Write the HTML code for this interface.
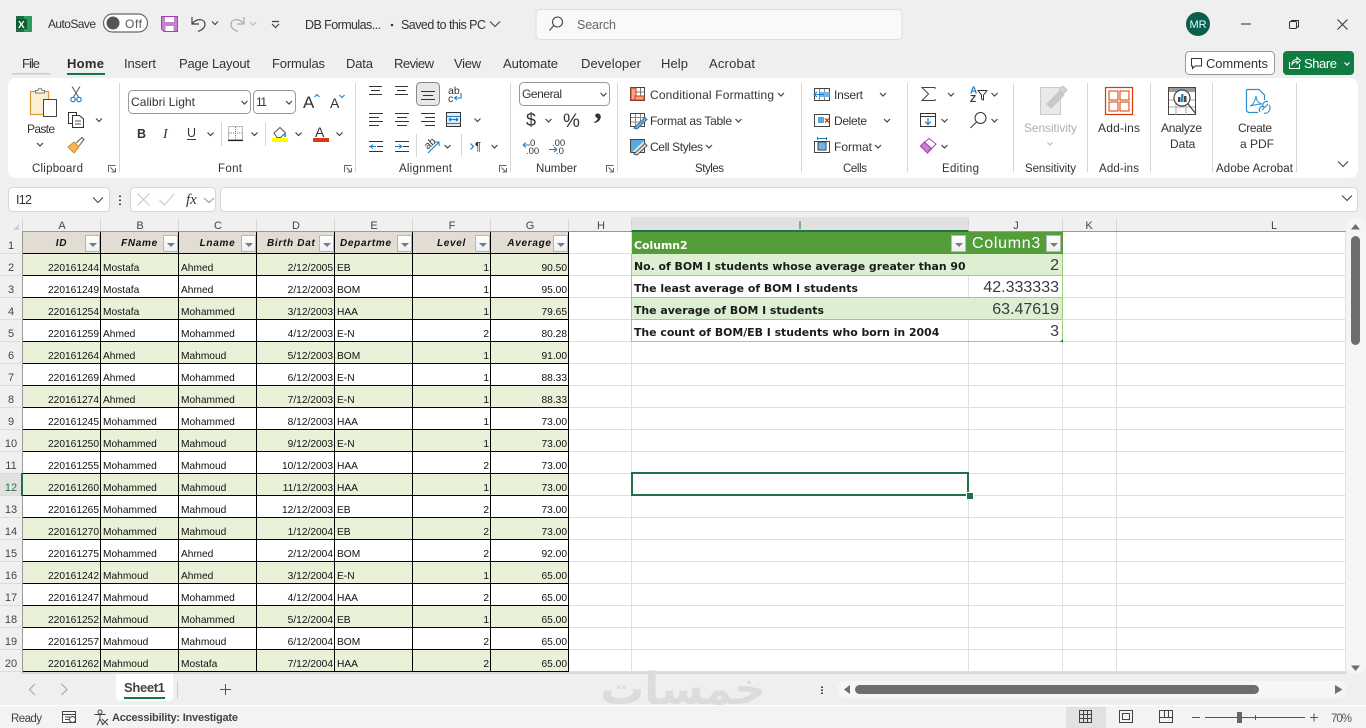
<!DOCTYPE html>
<html><head><meta charset="utf-8"><title>Excel</title>
<style>
html,body{margin:0;padding:0;width:1366px;height:728px;overflow:hidden;background:#efefef;font-family:"Liberation Sans",sans-serif}
.a{position:absolute}
svg text{font-family:"Liberation Sans",sans-serif;font-size:12px;fill:#333}
svg .s{font-size:11.5px}
svg .tb{font-size:13px}
svg .rn{font-size:11px;fill:#444;text-anchor:middle}
#grid{left:569px;top:232px;width:777px;height:441px;background:#fff;
background-image:repeating-linear-gradient(to bottom,transparent 0,transparent 21px,#e0e0e0 21px,#e0e0e0 22px)}
.v{position:absolute;top:0;width:1px;height:441px;background:#e0e0e0}
table{position:absolute;left:23px;top:232px;border-collapse:separate;border-spacing:0;table-layout:fixed;width:546px;background:#fff}
td{box-sizing:border-box;width:78px;height:22px;padding:0 1px 0 2px;border-right:1px solid #000;border-bottom:1px solid #000;font-size:10.2px;line-height:12px;color:#111;vertical-align:bottom;white-space:nowrap;overflow:hidden}
tr.g td{background:#e9f1d9}
td.r{text-align:right}
tr.h td{background:#e3dcd2;font-weight:bold;font-style:italic;font-size:10px;letter-spacing:.7px;text-align:center;padding:0 0 3px 0}
.f{position:absolute;box-sizing:border-box;width:15px;height:17px;top:235px;background:linear-gradient(#fff,#eceff2);border:1px solid #b8b8b8}
.f:after{content:"";position:absolute;left:3px;top:7px;border-left:4px solid transparent;border-right:4px solid transparent;border-top:4px solid #7b7b7b}
.t{position:absolute;left:631px;width:432px;height:22px;box-sizing:border-box;border-left:1px solid #9ad07d;border-right:1px solid #9ad07d;border-bottom:1px solid #9ad07d}
.t b{position:absolute;left:2px;top:6px;font:bold 10.9px/13px "DejaVu Sans",sans-serif;color:#1b1b1b;white-space:nowrap}
.t i{position:absolute;right:3px;top:3px;font:normal 16px/18px "Liberation Sans",sans-serif;color:#3a3a3a}
.t u{position:absolute;left:336px;top:0;width:1px;height:21px;background:#e0e0e0}
</style></head><body>

<div class="a" id="grid">
<div class="v" style="left:62px"></div><div class="v" style="left:399px"></div><div class="v" style="left:493px"></div><div class="v" style="left:547px"></div><div class="v" style="left:776px"></div>
</div>
<div class="a" style="left:22px;top:232px;width:1px;height:441px;background:#9a9a9a"></div>
<div class="a" style="left:22px;top:672px;width:1324px;height:2px;background:#d9d9d9"></div>

<table>
<tr class="h"><td>ID</td><td>FName</td><td>Lname</td><td style="text-align:left;padding-left:10px">Birth Dat</td><td style="text-align:left;padding-left:5px">Departme</td><td>Level</td><td>Average</td></tr>
<tr class="g"><td class="r">220161244</td><td>Mostafa</td><td>Ahmed</td><td class="r">2/12/2005</td><td>EB</td><td class="r">1</td><td class="r">90.50</td></tr>
<tr><td class="r">220161249</td><td>Mostafa</td><td>Ahmed</td><td class="r">2/12/2003</td><td>BOM</td><td class="r">1</td><td class="r">95.00</td></tr>
<tr class="g"><td class="r">220161254</td><td>Mostafa</td><td>Mohammed</td><td class="r">3/12/2003</td><td>HAA</td><td class="r">1</td><td class="r">79.65</td></tr>
<tr><td class="r">220161259</td><td>Ahmed</td><td>Mohammed</td><td class="r">4/12/2003</td><td>E-N</td><td class="r">2</td><td class="r">80.28</td></tr>
<tr class="g"><td class="r">220161264</td><td>Ahmed</td><td>Mahmoud</td><td class="r">5/12/2003</td><td>BOM</td><td class="r">1</td><td class="r">91.00</td></tr>
<tr><td class="r">220161269</td><td>Ahmed</td><td>Mohammed</td><td class="r">6/12/2003</td><td>E-N</td><td class="r">1</td><td class="r">88.33</td></tr>
<tr class="g"><td class="r">220161274</td><td>Ahmed</td><td>Mohammed</td><td class="r">7/12/2003</td><td>E-N</td><td class="r">1</td><td class="r">88.33</td></tr>
<tr><td class="r">220161245</td><td>Mohammed</td><td>Mohammed</td><td class="r">8/12/2003</td><td>HAA</td><td class="r">1</td><td class="r">73.00</td></tr>
<tr class="g"><td class="r">220161250</td><td>Mohammed</td><td>Mahmoud</td><td class="r">9/12/2003</td><td>E-N</td><td class="r">1</td><td class="r">73.00</td></tr>
<tr><td class="r">220161255</td><td>Mohammed</td><td>Mahmoud</td><td class="r">10/12/2003</td><td>HAA</td><td class="r">2</td><td class="r">73.00</td></tr>
<tr class="g"><td class="r">220161260</td><td>Mohammed</td><td>Mahmoud</td><td class="r">11/12/2003</td><td>HAA</td><td class="r">1</td><td class="r">73.00</td></tr>
<tr><td class="r">220161265</td><td>Mohammed</td><td>Mahmoud</td><td class="r">12/12/2003</td><td>EB</td><td class="r">2</td><td class="r">73.00</td></tr>
<tr class="g"><td class="r">220161270</td><td>Mohammed</td><td>Mahmoud</td><td class="r">1/12/2004</td><td>EB</td><td class="r">2</td><td class="r">73.00</td></tr>
<tr><td class="r">220161275</td><td>Mohammed</td><td>Ahmed</td><td class="r">2/12/2004</td><td>BOM</td><td class="r">2</td><td class="r">92.00</td></tr>
<tr class="g"><td class="r">220161242</td><td>Mahmoud</td><td>Ahmed</td><td class="r">3/12/2004</td><td>E-N</td><td class="r">1</td><td class="r">65.00</td></tr>
<tr><td class="r">220161247</td><td>Mahmoud</td><td>Mohammed</td><td class="r">4/12/2004</td><td>HAA</td><td class="r">2</td><td class="r">65.00</td></tr>
<tr class="g"><td class="r">220161252</td><td>Mahmoud</td><td>Mohammed</td><td class="r">5/12/2004</td><td>EB</td><td class="r">1</td><td class="r">65.00</td></tr>
<tr><td class="r">220161257</td><td>Mahmoud</td><td>Mahmoud</td><td class="r">6/12/2004</td><td>BOM</td><td class="r">2</td><td class="r">65.00</td></tr>
<tr class="g"><td class="r">220161262</td><td>Mahmoud</td><td>Mostafa</td><td class="r">7/12/2004</td><td>HAA</td><td class="r">2</td><td class="r">65.00</td></tr>
</table>
<div class="f" style="left:85px"></div><div class="f" style="left:163px"></div><div class="f" style="left:241px"></div><div class="f" style="left:319px"></div><div class="f" style="left:397px"></div><div class="f" style="left:475px"></div><div class="f" style="left:553px"></div>

<div class="a" style="left:632px;top:232px;width:431px;height:22px;background:#549e39;color:#fff;box-sizing:border-box">
<span class="a" style="left:2px;top:7px;font:bold 10.9px/13px 'DejaVu Sans',sans-serif;white-space:nowrap">Column2</span>
<span class="a" style="left:340px;top:3px;font:16px/18px 'Liberation Sans',sans-serif;letter-spacing:.7px;white-space:nowrap">Column3</span>
</div>
<div class="f" style="left:951px"></div><div class="f" style="left:1046px"></div>
<div class="t" style="top:254px;background:#dcefd3"><b>No. of BOM I students whose average greater than 90</b><i>2</i></div>
<div class="t" style="top:276px;background:#fff"><u></u><b>The least average of BOM I students</b><i>42.333333</i></div>
<div class="t" style="top:298px;background:#dcefd3"><b>The average of BOM I students</b><i>63.47619</i></div>
<div class="t" style="top:320px;background:#fff"><u></u><b>The count of BOM/EB I students who born in 2004</b><i>3</i></div>
<div class="a" style="left:1060px;top:339px;width:0;height:0;border-left:3px solid transparent;border-bottom:3px solid #217346"></div>

<div class="a" style="left:631px;top:472px;width:338px;height:24px;box-sizing:border-box;border:2px solid #1f7246"></div>
<div class="a" style="left:966px;top:492px;width:6px;height:6px;background:#1f7246;border:1px solid #fff"></div>

<svg class="a" style="left:0;top:0" width="1366" height="728" viewBox="0 0 1366 728">
<defs>
<path id="c" d="M-3 -1.5L0 1.5L3 -1.5" fill="none" stroke="#444" stroke-width="1.2"/>
<path id="c2" d="M-5 -2.5L0 2.5L5 -2.5" fill="none" stroke="#444" stroke-width="1.1"/>
</defs>

<!-- title bar -->
<rect x="16" y="16" width="16" height="16" fill="#1d6f42"/><rect x="24" y="16" width="8" height="16" fill="#2f9a5e"/><rect x="16" y="19" width="11" height="10" fill="#0f5c33"/>
<text x="18" y="28" style="font-size:10px;font-weight:bold;fill:#fff">X</text>
<text x="48" y="28" textLength="48">AutoSave</text>
<rect x="103.5" y="14" width="44" height="18" rx="9" fill="#fff" stroke="#666" stroke-width="1.2"/>
<circle cx="113" cy="23" r="6.5" fill="#555"/>
<text x="125" y="28" textLength="17" style="fill:#555">Off</text>
<path d="M161.5 16.5H177.5V31.5H164L161.5 29Z" fill="#c77fd0" stroke="#a33fb2"/><rect x="165" y="17" width="9" height="5" fill="#fff"/><rect x="165.5" y="26" width="8" height="5" fill="#fff"/>
<path d="M192 17V24H199M192.5 23.5C197 18 205 18.500 205 24.500C205 27.500 202 30 198 31.500" fill="none" stroke="#444" stroke-width="1.2"/>
<use href="#c" x="215" y="23"/>
<path d="M244 17V24H237M243.500 23.500C239 18 231 18.500 231 24.500C231 27.500 234 30 238 31.500" fill="none" stroke="#aaa" stroke-width="1.2"/>
<path d="M250 22L253 25L256 22" fill="none" stroke="#bbb" stroke-width="1.200"/>
<path d="M272 21.500H279M272 24L275.500 27.500L279 24" fill="none" stroke="#444" stroke-width="1.200"/>
<text x="305" y="29" textLength="76" style="font-size:12.500px">DB Formulas...</text>
<circle cx="392" cy="25" r="1.300" fill="#333"/>
<text x="401" y="29" textLength="85" style="font-size:12.500px">Saved to this PC</text>
<use href="#c2" x="495" y="24"/>

<rect x="536" y="9.500" width="366" height="30" rx="4" fill="#f9f9f9" stroke="#dedede"/>
<circle cx="557.500" cy="22" r="5" fill="none" stroke="#444" stroke-width="1.100"/><path d="M553.800 25.500L549.500 30.500" stroke="#444" stroke-width="1.100"/>
<text x="577" y="29" textLength="39" style="fill:#666;font-size:12.500px">Search</text>

<circle cx="1198" cy="24" r="12" fill="#0b5e4e"/>
<text x="1198" y="28" text-anchor="middle" style="fill:#dff;font-size:11px">MR</text>
<path d="M1241 24H1251" stroke="#333"/>
<rect x="1289.500" y="21.500" width="7" height="7" rx="1" fill="none" stroke="#333"/><path d="M1291.500 21.500V20.500H1298.500V27H1296.500" fill="none" stroke="#333"/>
<path d="M1337.500 19.500L1347.500 29.500M1347.500 19.500L1337.500 29.500" stroke="#333"/>

<!-- tabs -->
<g>
<text x="22" y="68" textLength="18" class="tb">File</text>
<text x="67" y="68" textLength="37" style="font-weight:bold;font-size:13px;fill:#2a2a2a">Home</text>
<text x="124" y="68" textLength="32" class="tb">Insert</text>
<text x="179" y="68" textLength="71" class="tb">Page Layout</text>
<text x="272" y="68" textLength="53" class="tb">Formulas</text>
<text x="346" y="68" textLength="27" class="tb">Data</text>
<text x="394" y="68" textLength="40" class="tb">Review</text>
<text x="454" y="68" textLength="27" class="tb">View</text>
<text x="503" y="68" textLength="55" class="tb">Automate</text>
<text x="581" y="68" textLength="60" class="tb">Developer</text>
<text x="661" y="68" textLength="27" class="tb">Help</text>
<text x="709" y="68" textLength="46" class="tb">Acrobat</text>
</g>
<rect x="12" y="73" width="38" height="1.500" fill="#ccc"/>
<rect x="67" y="73" width="38" height="2" fill="#107c41"/>

<rect x="1185.500" y="51.500" width="89" height="23" rx="4" fill="#fff" stroke="#999"/>
<path d="M1191.500 58.500H1201.500V66H1195L1192.500 68.500V66H1191.500Z" fill="none" stroke="#333"/>
<text x="1206" y="68" textLength="62" class="tb">Comments</text>
<rect x="1283" y="51" width="71" height="24" rx="4" fill="#107c41"/>
<path d="M1289.500 62V68.500H1299.500V64M1292 64.500C1292 60.500 1295 59.500 1297 59.500V57.500L1300.500 60.500L1297 63.500V61.500C1295 61.500 1293.500 62.500 1292 64.500Z" fill="none" stroke="#fff"/>
<text x="1304" y="68" textLength="33" style="fill:#fff;font-size:13px">Share</text>
<path d="M1344.500 62.500L1347 65L1349.500 62.500" fill="none" stroke="#fff" stroke-width="1.200"/>

<!-- ribbon -->
<rect x="8" y="78" width="1350" height="100" rx="8" fill="#fff"/>
<path d="M119.500 83V172M355.500 83V172M510.500 83V172M617.500 83V172M801.500 83V172M907.500 83V172M1013.500 83V172M1087.500 83V172M1150.500 83V172M1212.500 83V172M1296.500 83V172" stroke="#d6d6d6"/>
<path d="M221.500 122V146M265.500 122V146M416.500 134V157M461.500 134V157" stroke="#d6d6d6"/>

<!-- clipboard -->
<rect x="30.500" y="91.500" width="18" height="23" fill="#fbeed2" stroke="#d89a30" stroke-width="1.200"/>
<path d="M35.500 93V90.500H38C38.500 87.500 41.500 87.500 42 90.500H44.500V93Z" fill="#fff" stroke="#777"/>
<rect x="43.500" y="99.500" width="13" height="17" fill="#fff" stroke="#444"/>
<text x="27" y="133" textLength="28">Paste</text>
<use href="#c" x="40" y="144.500"/>
<path d="M72 86.500L78.500 97M80 86.500L73.500 97" stroke="#555" stroke-width="1"/><circle cx="73" cy="99.500" r="2.200" fill="none" stroke="#1a7fc8" stroke-width="1.200"/><circle cx="79" cy="99.500" r="2.200" fill="none" stroke="#1a7fc8" stroke-width="1.200"/>
<path d="M72 123.500H68.500V112.500H76.500V115.500" fill="none" stroke="#333"/><path d="M72.500 115.500H79.500L83.500 119V127.500H72.500Z" fill="#fff" stroke="#333"/><path d="M75 121H81M75 124H81" stroke="#555"/>
<use href="#c" x="99" y="120"/>
<path d="M68 147L74 142L79 147L74 153Z" fill="#f3b560" stroke="#d48a2c"/><path d="M76 143L82 137.500L84 139.500L79 146" fill="#fff" stroke="#555"/>
<text x="32" y="172" textLength="51" class="s">Clipboard</text>
<path d="M108.500 172V165.500H115.500M115.500 172H111.500M115.500 172V168M110.500 167.500L115 172" fill="none" stroke="#666"/>

<!-- font -->
<rect x="128.500" y="90.500" width="122" height="23" rx="4" fill="#fff" stroke="#999"/>
<rect x="253.500" y="90.500" width="42" height="23" rx="4" fill="#fff" stroke="#999"/>
<text x="131" y="106" textLength="64">Calibri Light</text>
<use href="#c" x="244.500" y="102.500"/>
<text x="256" y="106" textLength="11">11</text>
<use href="#c" x="289" y="102.500"/>
<text x="303" y="108" style="font-size:17px">A</text><path d="M314.500 97L317 94.500L319.500 97" fill="none" stroke="#1a7fc8" stroke-width="1.100"/>
<text x="330" y="108" style="font-size:14px">A</text><path d="M339.500 95L342 97.500L344.500 95" fill="none" stroke="#1a7fc8" stroke-width="1.100"/>
<text x="137" y="138" style="font-weight:bold;font-size:12.500px">B</text>
<text x="163" y="138" style="font-style:italic;font-family:'Liberation Serif',serif;font-size:14px">I</text>
<text x="187" y="137" style="font-size:12.500px">U</text><path d="M187 139.500H196" stroke="#333"/>
<use href="#c" x="210.500" y="134"/>
<rect x="228.500" y="126.500" width="14" height="13" fill="none" stroke="#777" stroke-dasharray="1 1"/><path d="M235.500 127V140M229 133H242" stroke="#777" stroke-dasharray="1 1"/><path d="M228 140.500H243" stroke="#222" stroke-width="1.200"/>
<use href="#c" x="254.500" y="134"/>
<path d="M274 133L280 127.500L285.500 133L280.500 137.500H277Z" fill="#fff" stroke="#555"/><path d="M285 134V137" stroke="#1a7fc8" stroke-width="1.500"/>
<rect x="272" y="138" width="16" height="4" fill="#ffff00"/>
<use href="#c" x="298.500" y="134"/>
<text x="315" y="137" style="font-size:14px">A</text>
<rect x="313" y="138" width="16" height="4" fill="#d93a12"/>
<use href="#c" x="339.500" y="134"/>
<text x="218" y="172" textLength="24" class="s">Font</text>
<path d="M344.500 172V165.500H351.500M351.500 172H347.500M351.500 172V168M346.500 167.500L351 172" fill="none" stroke="#666"/>

<!-- alignment -->
<rect x="416.500" y="82.500" width="23" height="23" rx="4" fill="#e8e8e8" stroke="#888"/>
<path d="M369 86.500H382M371 90.500H380M369 94.500H382" stroke="#333"/>
<path d="M395 91.500H408M397 95.500H406M395 99.500H408" stroke="#333" transform="translate(0,-5)"/>
<path d="M421 91.500H435M423 95.500H433M421 99.500H435" stroke="#333"/>
<text x="448" y="94" style="font-size:10.500px">ab</text><text x="448" y="102" style="font-size:10.500px">c</text><path d="M461 93V98H455M457 96L454.500 98L457 100" fill="none" stroke="#1a7fc8" stroke-width="1.100"/>
<path d="M369 113.500H383M369 117.500H379M369 121.500H383M369 125.500H379" stroke="#333"/>
<path d="M395 113.500H409M397 117.500H407M395 121.500H409M397 125.500H407" stroke="#333"/>
<path d="M421 113.500H435M425 117.500H435M421 121.500H435M425 125.500H435" stroke="#333"/>
<rect x="446.500" y="112.500" width="14" height="14" fill="#d9ecf8" stroke="#333"/><path d="M449 119.500H458M449 119.500L451 118M449 119.500L451 121M458 119.500L456 118M458 119.500L456 121" fill="none" stroke="#1a7fc8" stroke-width="1.100"/><path d="M446.500 116.500H460.500M446.500 123.500H460.500" stroke="#1a7fc8"/>
<use href="#c" x="477.500" y="120"/>
<path d="M369 146.500H376M370 146.500L373 144.500M370 146.500L373 148.500" fill="none" stroke="#1a7fc8"/><path d="M369 141.500H383M377 146.500H383M369 151.500H383" stroke="#333"/>
<path d="M395 146.500H402M402 146.500L399 144.500M402 146.500L399 148.500" fill="none" stroke="#1a7fc8"/><path d="M395 141.500H409M403 146.500H409M395 151.500H409" stroke="#333"/>
<text x="424" y="146" transform="rotate(-40 431 143)" style="font-size:10.500px">ab</text><path d="M428 153L439 142M435 142H439V146" fill="none" stroke="#1a7fc8" stroke-width="1.100"/>
<use href="#c" x="447.500" y="146.500"/>
<path d="M470.500 143.500L473.500 146.500L470.500 149.500" fill="none" stroke="#1a7fc8" stroke-width="1.200"/>
<text x="475" y="150.500" style="font-size:11.500px">¶</text>
<use href="#c" x="494.500" y="146.500"/>
<text x="399" y="172" textLength="53" class="s">Alignment</text>
<path d="M499.500 172V165.500H506.500M506.500 172H502.500M506.500 172V168M501.500 167.500L506 172" fill="none" stroke="#666"/>

<!-- number -->
<rect x="519.500" y="82.500" width="90" height="23" rx="4" fill="#fff" stroke="#999"/>
<text x="522" y="98" textLength="40">General</text>
<use href="#c" x="603.500" y="94.500"/>
<text x="526" y="126" style="font-size:18px">$</text>
<use href="#c" x="548.500" y="120.500"/>
<text x="563" y="127" style="font-size:19px;font-weight:normal">%</text>
<text x="594" y="118" style="font-size:32px;font-family:'Liberation Serif',serif;font-weight:bold">,</text>
<text x="530" y="146" style="font-size:9.500px">0</text><text x="526" y="154" style="font-size:9.500px">.00</text><path d="M523 145H530M523 145L526 142.500M523 145L526 147.500" fill="none" stroke="#1a7fc8" stroke-width="1.100"/>
<text x="552" y="146" style="font-size:9.500px">.00</text><text x="556" y="154" style="font-size:9.500px">.0</text><path d="M549 149.500H557M557 149.500L554 147M557 149.500L554 152" fill="none" stroke="#1a7fc8" stroke-width="1.100"/>
<text x="536" y="172" textLength="41" class="s">Number</text>
<path d="M606.500 172V165.500H613.500M613.500 172H609.500M613.500 172V168M608.500 167.500L613 172" fill="none" stroke="#666"/>

<!-- styles -->
<rect x="630.500" y="87.500" width="14" height="13" fill="#fff" stroke="#444"/><path d="M635.500 88V100M640.500 88V100M631 92H645M631 96.500H645" stroke="#777"/><rect x="631" y="88" width="5" height="12" fill="#f4a38e" stroke="#d83b01"/><rect x="635" y="96" width="9" height="4" fill="#f4a38e" stroke="#d83b01"/>
<text x="650" y="99" textLength="124">Conditional Formatting</text><use href="#c" x="781" y="94.500"/>
<rect x="630.500" y="113.500" width="14" height="13" fill="#fff" stroke="#444"/><path d="M631 117.500H645M635.500 114V127M640.500 114V127M631 122H645" stroke="#888"/><path d="M634 128L645 117.500L647 119.500L637 129Z" fill="#6fb1e0" stroke="#3b6f9e"/>
<text x="650" y="125" textLength="82">Format as Table</text><use href="#c" x="738.500" y="120.500"/>
<rect x="630.500" y="139.500" width="14" height="13" fill="#cfe6f7" stroke="#444"/><path d="M631 140L645 140L631 153Z" fill="#5ba7e0"/><path d="M634 154L645 143.500L647 145.500L637 155Z" fill="#e8e8e8" stroke="#555"/>
<text x="650" y="151" textLength="53">Cell Styles</text><use href="#c" x="709" y="146.500"/>
<text x="695" y="172" textLength="29" class="s">Styles</text>

<!-- cells -->
<rect x="814.500" y="88.500" width="15" height="12" fill="#fff" stroke="#444"/><path d="M819.500 89V100M824.500 89V100" stroke="#888"/><rect x="820" y="92" width="9.500" height="5" fill="#6fb7ea"/><path d="M814 94.500H824M817 92L814 94.500L817 97" fill="none" stroke="#1a7fc8" stroke-width="1.100"/>
<text x="834" y="99" textLength="29">Insert</text><use href="#c" x="883" y="94.500"/>
<rect x="814.500" y="114.500" width="15" height="12" fill="#fff" stroke="#444"/><rect x="818" y="117" width="6" height="6" fill="#58a8e0"/><path d="M825 118.500L829 122.500M829 118.500L825 122.500" stroke="#d83b01" stroke-width="1.300"/>
<text x="834" y="125" textLength="33">Delete</text><use href="#c" x="887" y="120.500"/>
<rect x="814.500" y="141.500" width="15" height="11" fill="#fff" stroke="#444"/><rect x="818" y="142" width="8" height="8" fill="#6fb7ea" stroke="#444"/><path d="M818 138.500H826M817.500 137V140M826.500 137V140" stroke="#1a7fc8"/>
<text x="834" y="151" textLength="38">Format</text><use href="#c" x="878" y="146.500"/>
<text x="843" y="172" textLength="24" class="s">Cells</text>

<!-- editing -->
<path d="M935 89V87.500H922L928.500 94L922 100.500H935V99" fill="none" stroke="#444"/>
<use href="#c" x="951" y="94.500"/>
<text x="970" y="93.500" style="font-size:10px;fill:#1a7fc8;font-weight:bold">A</text><text x="970" y="102" style="font-size:10px;fill:#333;font-weight:bold">Z</text><path d="M978 90.500H987L983.500 95V100L981.500 99V95Z" fill="none" stroke="#333"/>
<use href="#c" x="994.500" y="94.500"/>
<rect x="920.500" y="113.500" width="15" height="13" fill="#fff" stroke="#333"/><path d="M921 116.500H935" stroke="#333"/><path d="M928 118V124M925 121.500L928 124.500L931 121.500" fill="none" stroke="#1a7fc8" stroke-width="1.200"/>
<use href="#c" x="944.500" y="120.500"/>
<circle cx="980.500" cy="118" r="5.500" fill="none" stroke="#333"/><path d="M976.500 122L970.500 128" stroke="#333"/>
<use href="#c" x="994.500" y="120.500"/>
<path d="M920.500 146L929 138.500L936 144L927.500 153Z" fill="#fff" stroke="#a33fb2"/><path d="M920.500 146L924.500 142L931 148L927.500 153Z" fill="#c77fd0" stroke="#a33fb2"/>
<use href="#c" x="944.500" y="146.500"/>
<text x="942" y="172" textLength="37" class="s">Editing</text>

<!-- sensitivity -->
<rect x="1040.500" y="87.500" width="20" height="27" fill="#e9e9e9" stroke="#ccc"/>
<path d="M1047 104L1060 91L1064 95L1051 108Z" fill="#c9c9c9" stroke="#c4c4c4"/><path d="M1059 90L1063 86L1067 90L1063 94Z" fill="#d4d4d4" stroke="#c4c4c4"/>
<text x="1024" y="132" textLength="53" style="fill:#b0b0b0">Sensitivity</text>
<path d="M1047.500 142.500L1050 145L1052.500 142.500" fill="none" stroke="#bbb" stroke-width="1.200"/>
<text x="1025" y="172" textLength="51" class="s">Sensitivity</text>

<!-- add-ins -->
<rect x="1105.500" y="87.500" width="27" height="27" fill="#fff" stroke="#d83b01" stroke-width="1.200"/>
<rect x="1109" y="91" width="9" height="9" fill="none" stroke="#d83b01"/><rect x="1120" y="91" width="9" height="9" fill="none" stroke="#d83b01"/><rect x="1109" y="102" width="9" height="9" fill="none" stroke="#d83b01"/><rect x="1120" y="102" width="9" height="9" fill="none" stroke="#d83b01"/>
<text x="1098" y="132" textLength="42">Add-ins</text>
<text x="1099" y="172" textLength="40" class="s">Add-ins</text>

<!-- analyze -->
<rect x="1168.500" y="87.500" width="27" height="27" fill="#fff" stroke="#444"/><rect x="1169" y="88" width="26" height="4" fill="#999"/>
<path d="M1169 100H1195M1169 107H1195M1176 92V115M1186 105V115" stroke="#aaa"/>
<circle cx="1182" cy="98" r="8" fill="#fff" stroke="#444" stroke-width="1.200"/><path d="M1188 104L1196 114" stroke="#444" stroke-width="1.300"/>
<rect x="1178" y="97" width="2.500" height="5" fill="#444"/><rect x="1181" y="94" width="2.500" height="8" fill="#2a8dd4"/><rect x="1184" y="96" width="2.500" height="6" fill="#444"/>
<text x="1161" y="132" textLength="41">Analyze</text>
<text x="1170" y="148">Data</text>

<!-- pdf -->
<path d="M1246.500 89.500H1259L1264.500 95V100M1258 112.500H1249A3 3 0 0 1 1246.500 110V89.500" fill="none" stroke="#2a8dd4" stroke-width="1.200"/>
<path d="M1250 106C1253 105 1255 101 1256 96C1256.500 101 1258 103 1262 104C1258 104 1254 105 1250 106Z" fill="none" stroke="#2a8dd4"/>
<path d="M1262 110L1268 104M1260 112C1258 109 1261 105 1264 107M1264 113C1268 115 1272 108 1269 105M1268 102C1265 100 1262 104 1263 106" fill="none" stroke="#2a8dd4" stroke-width="1.200"/>
<text x="1238" y="132" textLength="34">Create</text>
<text x="1240" y="148">a PDF</text>
<text x="1216" y="172" textLength="77" class="s">Adobe Acrobat</text>
<use href="#c2" x="1343" y="164"/>

<!-- formula bar -->
<rect x="8.500" y="187.500" width="101" height="24" rx="4" fill="#fff" stroke="#d8d8d8"/>
<text x="16" y="204" textLength="16" style="font-size:12.500px">I12</text>
<use href="#c2" x="98" y="200"/>
<path d="M120 195.500V197M120 199.500V201M120 203.500V205" stroke="#444" stroke-width="2"/>
<rect x="130.500" y="187.500" width="85" height="24" rx="4" fill="#fff" stroke="#d8d8d8"/>
<path d="M137.500 193.500L149.500 205.500M149.500 193.500L137.500 205.500" stroke="#c8c8c8" stroke-width="1.100"/>
<path d="M159.500 200L164.500 205L174 194" fill="none" stroke="#c8c8c8" stroke-width="1.100"/>
<text x="186" y="204" style="font-family:'Liberation Serif',serif;font-style:italic;font-size:15px;fill:#333">fx</text>
<path d="M204 198L209 202.500L214 198" fill="none" stroke="#999" stroke-width="1.100"/>
<rect x="220.500" y="187.500" width="1137" height="24" rx="4" fill="#fff" stroke="#d8d8d8"/>
<use href="#c2" x="1347" y="198"/>

<!-- column headers -->
<rect x="0" y="216" width="1346" height="16" fill="#f0f0f0"/>
<rect x="631" y="217" width="338" height="15" fill="#e1e1e1"/>
<rect x="631" y="230" width="338" height="2" fill="#217346"/>
<rect x="22" y="231" width="609" height="1" fill="#9a9a9a"/>
<rect x="969" y="231" width="377" height="1" fill="#9a9a9a"/>
<path d="M22.500 219V231M100.500 219V231M178.500 219V231M256.500 219V231M334.500 219V231M412.500 219V231M490.500 219V231M568.500 219V231M631.500 219V231M968.500 219V231M1062.500 219V231M1116.500 219V231" stroke="#d4d4d4"/>
<path d="M19 224V230H13Z" fill="#d0d0d0"/>
<text x="62" y="229" class="rn">A</text><text x="140" y="229" class="rn">B</text><text x="218" y="229" class="rn">C</text><text x="296" y="229" class="rn">D</text><text x="374" y="229" class="rn">E</text><text x="452" y="229" class="rn">F</text><text x="530" y="229" class="rn">G</text><text x="601" y="229" class="rn">H</text>
<rect x="799.500" y="221" width="1" height="8" fill="#217346"/>
<text x="1016" y="229" class="rn">J</text><text x="1089" y="229" class="rn">K</text><text x="1274" y="229" class="rn">L</text>

<!-- row headers -->
<rect x="0" y="232" width="22" height="441" fill="#f0f0f0"/>
<rect x="0" y="474" width="22" height="22" fill="#e1e1e1"/>
<path d="M0 253.500H22M0 275.500H22M0 297.500H22M0 319.500H22M0 341.500H22M0 363.500H22M0 385.500H22M0 407.500H22M0 429.500H22M0 451.500H22M0 473.500H22M0 495.500H22M0 517.500H22M0 539.500H22M0 561.500H22M0 583.500H22M0 605.500H22M0 627.500H22M0 649.500H22M0 671.500H22" stroke="#dcdcdc"/>
<rect x="22" y="232" width="1" height="441" fill="#9a9a9a"/>
<rect x="21" y="473" width="2" height="23" fill="#217346"/>
<text x="11" y="249" class="rn">1</text><text x="11" y="271" class="rn">2</text><text x="11" y="293" class="rn">3</text><text x="11" y="315" class="rn">4</text><text x="11" y="337" class="rn">5</text><text x="11" y="359" class="rn">6</text><text x="11" y="381" class="rn">7</text><text x="11" y="403" class="rn">8</text><text x="11" y="425" class="rn">9</text><text x="11" y="447" class="rn">10</text><text x="11" y="469" class="rn">11</text><text x="11" y="491" class="rn" style="fill:#217346">12</text><text x="11" y="513" class="rn">13</text><text x="11" y="535" class="rn">14</text><text x="11" y="557" class="rn">15</text><text x="11" y="579" class="rn">16</text><text x="11" y="601" class="rn">17</text><text x="11" y="623" class="rn">18</text><text x="11" y="645" class="rn">19</text><text x="11" y="667" class="rn">20</text>

<!-- vertical scroll -->
<rect x="1346" y="218" width="20" height="456" rx="8" fill="#f5f5f5"/>
<path d="M1355.500 224L1360 229.500H1351Z" fill="#6e6e6e"/>
<rect x="1351" y="236" width="9" height="109" rx="4.500" fill="#6e6e6e"/>
<path d="M1351 665.500H1360L1355.500 671Z" fill="#6e6e6e"/>

<!-- sheet bar -->
<rect x="0" y="674" width="1366" height="32" fill="#efefef"/>
<path d="M116 674H173V697A4 4 0 0 1 169 701H120A4 4 0 0 1 116 697Z" fill="#fff"/>
<text x="124" y="692" textLength="41" style="font-weight:bold;font-size:13px;fill:#444">Sheet1</text>
<rect x="124" y="697" width="41" height="2" fill="#107c41"/>
<path d="M177.500 681V699" stroke="#ccc"/>
<path d="M35 684L29.500 689.500L35 695M61.500 684L67 689.500L61.500 695" fill="none" stroke="#aaa" stroke-width="1.200"/>
<path d="M220 689.500H231M225.500 684V695" stroke="#555"/>
<path d="M822 686.500V688M822 689.500V691M822 692.500V694" stroke="#444" stroke-width="2"/>
<rect x="838" y="681" width="508" height="17" rx="8" fill="#f6f6f6"/>
<path d="M850 685V694L844 689.500Z" fill="#6e6e6e"/>
<rect x="855" y="685" width="404" height="9" rx="4.500" fill="#6e6e6e"/>
<path d="M1335 685V694L1342.500 689.500Z" fill="#6e6e6e"/>

<!-- status bar -->
<rect x="0" y="706" width="1366" height="22" fill="#f3f3f3"/>
<rect x="0" y="705" width="1366" height="1" fill="#fff"/>
<text x="683" y="704" text-anchor="middle" textLength="165" lengthAdjust="spacingAndGlyphs" style="font-family:'DejaVu Sans',sans-serif;font-size:44px;font-weight:bold;fill:#dcdcdc">خمسات</text>
<text x="11" y="722" textLength="31" style="fill:#444;font-size:11.500px">Ready</text>
<rect x="62.500" y="711.500" width="13" height="11" fill="#fff" stroke="#444"/><path d="M62.500 714.500H75.500M65 717H70M65 719.500H69" stroke="#444"/><circle cx="72.500" cy="719.500" r="3" fill="#fff" stroke="#444"/>
<circle cx="100" cy="712" r="2" fill="none" stroke="#444"/><path d="M94.500 714.500H105.500M100 715V719M97 725L100 719L103 725" fill="none" stroke="#444"/><path d="M102 719L108 725M108 719L102 725" stroke="#444"/>
<text x="112" y="721" textLength="126" style="font-size:11px;font-weight:bold;fill:#444">Accessibility: Investigate</text>
<rect x="1066" y="707" width="40" height="21" fill="#e1e1e1"/>
<rect x="1079.500" y="710.500" width="12" height="12" fill="none" stroke="#444"/><path d="M1083.500 711V722M1087.500 711V722M1080 714.500H1091M1080 718.500H1091" stroke="#444"/>
<rect x="1119.500" y="710.500" width="13" height="12" fill="none" stroke="#444"/><rect x="1122.500" y="713.500" width="7" height="6" fill="none" stroke="#444"/>
<path d="M1159.500 722.500V710.500H1172.500V722.500Z" fill="none" stroke="#444"/><path d="M1164.500 710.500V717.500H1168.500V710.500M1159.500 717.500H1172.500" fill="none" stroke="#444"/>
<path d="M1192 717.500H1200M1205 717.500H1305M1310 717.500H1318M1314 713.500V721.500M1255.500 715V720" stroke="#555"/>
<rect x="1237" y="712" width="5" height="11" fill="#666"/>
<text x="1331" y="722" textLength="21" style="fill:#555;font-size:11.500px">70%</text>
</svg>
</body></html>
